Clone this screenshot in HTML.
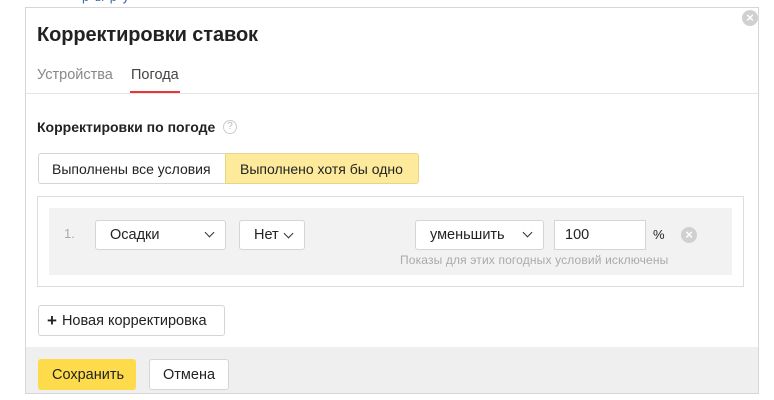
<!DOCTYPE html>
<html><head><meta charset="utf-8"><style>
*{box-sizing:border-box;margin:0;padding:0}
body{width:774px;height:400px;background:#fff;font-family:"Liberation Sans","DejaVu Sans",sans-serif;color:#222;position:relative;overflow:hidden}
.a{position:absolute}
.btn{position:absolute;border:1px solid #d5d5d5;border-radius:3px;background:#fff;font-size:14px;display:flex;align-items:center}
.chev{display:inline-block;width:7px;height:7px;border-right:1.5px solid #333;border-bottom:1.5px solid #333;transform:rotate(45deg);margin-top:-4px}
.x{position:absolute;width:16px;height:16px;border-radius:50%;background:#d0d0d0;color:#fff;font-size:13px;line-height:16px;text-align:center;font-weight:bold}
</style></head><body>
<div class="a" style="left:82px;top:-11px;font-size:13px;color:#3b6ab3;letter-spacing:1px">р  ы  р   у</div>
<div class="a" style="left:25px;top:7px;width:734px;height:387px;border:1px solid #d6d6d6;background:#fff"></div>
<div class="a" style="left:26px;top:347px;width:732px;height:46px;background:#efefef"></div>
<div class="x" style="left:742px;top:10px">×</div>
<div class="a" style="left:37px;top:24px;font-size:20px;font-weight:bold;letter-spacing:-0.1px">Корректировки ставок</div>
<div class="a" style="left:37px;top:67px;font-size:14.5px;color:#888">Устройства</div>
<div class="a" style="left:131px;top:67px;font-size:14.5px;color:#444">Погода</div>
<div class="a" style="left:130px;top:91px;width:50px;height:2px;background:#e33"></div>
<div class="a" style="left:26px;top:93px;width:732px;height:1px;background:#e6e6e6"></div>
<div class="a" style="left:37px;top:119px;font-size:14px;font-weight:bold">Корректировки по погоде</div>
<div class="a" style="left:223px;top:120px;width:14px;height:14px;border:1px solid #ccc;border-radius:50%;font-size:10px;color:#bbb;text-align:center;line-height:12px">?</div>
<div class="btn" style="left:38px;top:153px;width:188px;height:31px;padding-left:13px;border-radius:3px 0 0 3px">Выполнены все условия</div>
<div class="btn" style="left:225px;top:153px;width:194px;height:31px;padding-left:14px;background:#fdeb9b;border-color:#e7d68a;border-radius:0 3px 3px 0">Выполнено хотя бы одно</div>
<div class="a" style="left:37px;top:196px;width:707px;height:91px;border:1px solid #ddd"></div>
<div class="a" style="left:49px;top:208px;width:683px;height:67px;background:#f2f2f2"></div>
<div class="a" style="left:64px;top:226px;font-size:13px;color:#aaa">1.</div>
<div class="btn" style="left:95px;top:220px;width:131px;height:30px;padding-left:14px;font-size:14.5px">Осадки<span class="chev" style="position:absolute;right:12px;top:12px"></span></div>
<div class="btn" style="left:239px;top:220px;width:66px;height:30px;padding-left:14px;font-size:14.5px">Нет<span class="chev" style="margin-left:6px"></span></div>
<div class="btn" style="left:415px;top:220px;width:129px;height:30px;padding-left:14px;font-size:14.5px">уменьшить<span class="chev" style="position:absolute;right:12px;top:12px"></span></div>
<div class="btn" style="left:554px;top:220px;width:92px;height:30px;padding-left:10px;font-size:14.5px;border-radius:0">100</div>
<div class="a" style="left:653px;top:227px;font-size:13px">%</div>
<div class="x" style="left:681px;top:227px">×</div>
<div class="a" style="left:400px;top:253px;font-size:12px;color:#aaa;letter-spacing:0.15px">Показы для этих погодных условий исключены</div>
<div class="btn" style="left:38px;top:305px;width:187px;height:31px;padding-left:8px;font-size:14.5px"><b style="font-size:17px;margin-right:5px">+</b>Новая корректировка</div>
<div class="btn" style="left:38px;top:359px;width:98px;height:31px;padding-left:13px;font-size:14.5px;background:#fddb4a;border-color:#fddb4a">Сохранить</div>
<div class="btn" style="left:149px;top:359px;width:80px;height:31px;padding-left:13px;font-size:14.5px">Отмена</div>
</body></html>
